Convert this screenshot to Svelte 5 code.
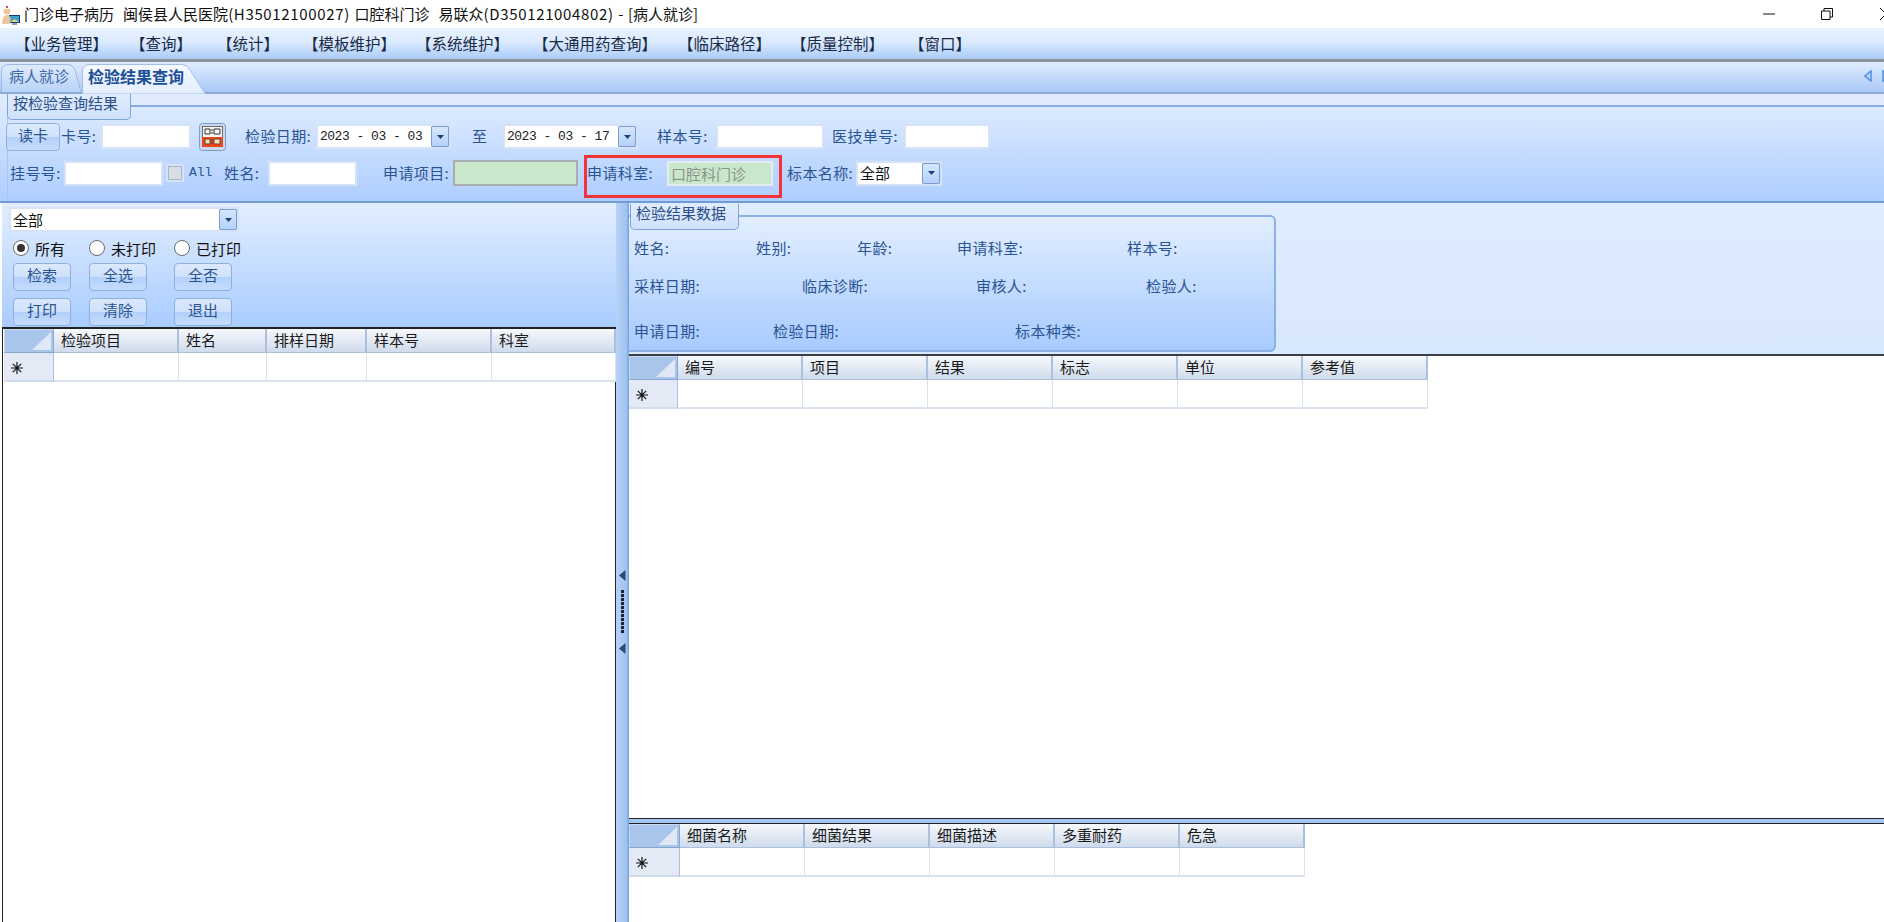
<script>
  const menus = ['【业务管理】', '【查询】', '【统计】', '【模板维护】', '【系统维护】', '【大通用药查询】', '【临床路径】', '【质量控制】', '【窗口】'];
  const leftCols = ['检验项目', '姓名', '排样日期', '样本号', '科室'];
  const rightCols = ['编号', '项目', '结果', '标志', '单位', '参考值'];
  const bottomCols = ['细菌名称', '细菌结果', '细菌描述', '多重耐药', '危急'];
</script>

{#snippet drop()}
  <span class="drop"><svg width="7" height="4" viewBox="0 0 7 4"><path d="M0 0h7L3.5 4z" fill="#1f3f78" /></svg></span>
{/snippet}

{#snippet datebox(value)}
  <span class="box date"><span class="dateval">{value}</span>{@render drop()}</span>
{/snippet}

{#snippet grid(kind, cols)}
  <div class="dg {kind}">
    <div class="dg-row head">
      <div class="corner"><svg width="20" height="18" viewBox="0 0 20 18"><path d="M20 0v18H1z" fill="#dfe8f4" /></svg></div>
      {#each cols as c}<div class="hcell">{c}</div>{/each}
    </div>
    <div class="dg-row body">
      <div class="rowhead">
        <svg width="12" height="12" viewBox="0 0 12 12"><path d="M6 0v12M0 6h12M1.8 1.8l8.4 8.4M10.2 1.8l-8.4 8.4" stroke="#111" stroke-width="1.2" /></svg>
      </div>
      {#each cols as c}<div class="cell"></div>{/each}
    </div>
  </div>
{/snippet}

<div class="app">
  <header class="title">
    <svg class="appicon" width="20" height="24" viewBox="0 0 20 24">
      <rect x="8" y="13" width="11" height="8" fill="#123a7a" />
      <rect x="9" y="14" width="9" height="6" fill="#3aa0c8" />
      <path d="M10 20l3-3 2 1 3 2z" fill="#e8d070" />
      <rect x="11" y="21" width="5" height="2" fill="#8aa0c0" />
      <circle cx="6" cy="9" r="3.5" fill="#f2c49a" />
      <path d="M2 7q4-6 8 0z" fill="#f4f6f8" />
      <path d="M1 22q0-9 5-9t3 9z" fill="#e9c8a0" />
      <rect x="5" y="4" width="2" height="2" fill="#e04040" />
    </svg>
    <span class="titletext">门诊电子病历  闽侯县人民医院<span class="lat">(H35012100027)</span>  口腔科门诊  易联众<span class="lat">(D350121004802)</span> - [病人就诊]</span>
    <svg class="wbtn min" width="12" height="2" viewBox="0 0 12 2"><path d="M0 1h12" stroke="#111" /></svg>
    <svg class="wbtn res" width="12" height="12" viewBox="0 0 12 12"><path d="M.5 3h8.500v8.500H.5zM3 3V.5h8.500V9H9" fill="none" stroke="#111" /></svg>
    <svg class="wbtn cls" width="12" height="12" viewBox="0 0 12 12"><path d="M0 0l12 12M12 0L0 12" stroke="#111" /></svg>
  </header>

  <nav class="menu">
    {#each menus as m, i}<span class="mi m{i}">{m}</span>{/each}
  </nav>

  <div class="tabs">
    <div class="tab t1">
      <svg class="tabshape" width="81" height="30" viewBox="0 0 81 30">
        <defs><linearGradient id="tg1" x1="0" y1="0" x2="0" y2="1"><stop offset="0" stop-color="#e0ecfe" /><stop offset="1" stop-color="#b9d3f8" /></linearGradient></defs>
        <path d="M.5 30V9Q.5 2.500 8 2.500H66Q72 2.500 74 8L80 30" fill="url(#tg1)" stroke="#9cbae2" />
      </svg>
      <span>病人就诊</span>
    </div>
    <div class="tab t2">
      <svg class="tabshape" width="124" height="32" viewBox="0 0 124 32">
        <defs><linearGradient id="tg2" x1="0" y1="0" x2="0" y2="1"><stop offset="0" stop-color="#f6f9ff" /><stop offset="1" stop-color="#e2edfe" /></linearGradient></defs>
        <path d="M.5 32V9Q.5 2.500 8 2.500H100Q105 2.500 108 8L122 30L124 32Z" fill="url(#tg2)" stroke="#a3c0e6" />
      </svg>
      <span>检验结果查询</span>
    </div>
    <div class="tabnav">
      <svg width="8" height="12" viewBox="0 0 8 12"><path d="M7 1v10L1 6z" fill="#bcd6fa" stroke="#4f8fe6" stroke-width="1.500" /></svg>
      <svg width="8" height="12" viewBox="0 0 8 12"><path d="M1 1v10l6-5z" fill="#bcd6fa" stroke="#4f8fe6" stroke-width="1.500" /></svg>
    </div>
  </div>

  <section class="query">
    <div class="q-frame">
      <div class="legend">按检验查询结果</div>
    </div>
    <div class="q-row r1">
      <button class="btn read">读卡</button>
      <span class="lab">卡号:</span>
      <span class="box w90"></span>
      <span class="qr">
        <svg width="27" height="28" viewBox="0 0 27 28">
          <rect x=".5" y=".5" width="26" height="27" rx="3" fill="#c8d8ee" stroke="#7f9cc8" />
          <rect x="3" y="3" width="21" height="21" fill="#6a6a6a" />
          <rect x="4" y="4" width="19" height="10" fill="#f4f4f4" />
          <path d="M6 6h5v5H6zM15 6h6v5h-6z" fill="none" stroke="#333" />
          <rect x="3" y="14" width="21" height="10" fill="#f2451f" />
          <path d="M6 16h5v5H6zM15 16h6v5h-6z" fill="#f6d8c8" stroke="#552" />
          <path d="M12 7h2M12 10h2M12 17h2M12 20h2" stroke="#333" />
        </svg>
      </span>
      <span class="lab">检验日期:</span>
      {@render datebox('2023 - 03 - 03')}
      <span class="lab">至</span>
      {@render datebox('2023 - 03 - 17')}
      <span class="lab">样本号:</span>
      <span class="box w108"></span>
      <span class="lab">医技单号:</span>
      <span class="box w86"></span>
    </div>
    <div class="q-row r2">
      <span class="lab">挂号号:</span>
      <span class="box w99"></span>
      <span class="check"></span>
      <span class="lab all">All</span>
      <span class="lab">姓名:</span>
      <span class="box w89"></span>
      <span class="lab">申请项目:</span>
      <span class="green"></span>
      <span class="lab">申请科室:</span>
      <span class="box dept">口腔科门诊</span>
      <span class="lab">标本名称:</span>
      <span class="box sel small"><span class="val">全部</span>{@render drop()}</span>
    </div>
    <div class="redmark"></div>
  </section>

  <main class="work">
    <aside class="left">
      <div class="filters">
        <span class="box sel wide"><span class="val">全部</span>{@render drop()}</span>
        <div class="triple radios">
          <label class="radio"><i class="dot on"></i>所有</label>
          <label class="radio"><i class="dot"></i>未打印</label>
          <label class="radio"><i class="dot"></i>已打印</label>
        </div>
        <div class="triple">
          <button class="btn act">检索</button><button class="btn act">全选</button><button class="btn act">全否</button>
        </div>
        <div class="triple">
          <button class="btn act">打印</button><button class="btn act">清除</button><button class="btn act">退出</button>
        </div>
      </div>
      <div class="leftgrid">{@render grid('g-left', leftCols)}</div>
    </aside>

    <div class="splitter">
      <svg width="7" height="11" viewBox="0 0 7 11"><path d="M6.500 0v11L0 5.500z" fill="#2c4a70" /></svg>
      <span class="grip"></span>
      <svg width="7" height="11" viewBox="0 0 7 11"><path d="M6.500 0v11L0 5.500z" fill="#2c4a70" /></svg>
    </div>

    <div class="right">
      <div class="result">
        <div class="rbox">
          <div class="legend rlegend">检验结果数据</div>
          <div class="info i1"><span>姓名:</span><span>姓别:</span><span>年龄:</span><span>申请科室:</span><span>样本号:</span></div>
          <div class="info i2"><span>采样日期:</span><span>临床诊断:</span><span>审核人:</span><span>检验人:</span></div>
          <div class="info i3"><span>申请日期:</span><span>检验日期:</span><span>标本种类:</span></div>
        </div>
      </div>
      <div class="midgrid">{@render grid('g-right', rightCols)}</div>
      <div class="botgrid">{@render grid('g-bottom', bottomCols)}</div>
    </div>
  </main>
</div>

<style>
  :global(body) { margin: 0; background: #fff; }
  .app {
    width: 1884px; height: 922px; overflow: hidden; display: flex; flex-direction: column;
    font-family: "Noto Sans CJK SC", "Noto Sans", sans-serif; font-size: 15px; color: #111;
  }
  .title { height: 28px; flex: none; background: #fff; display: flex; align-items: center; }
  .appicon { flex: none; margin-left: 1px; }
  .titletext { margin-left: 3px; white-space: pre; font-size: 15px; line-height: 28px; color: #111; word-spacing: 1.2px; }
  .lat { letter-spacing: .65px; }
  .wbtn { flex: none; }
  .min { margin-left: auto; }
  .res { margin-left: 46px; }
  .cls { margin-left: 47px; margin-right: -8px; }

  .menu {
    flex: none; display: grid; padding-left: 15px; align-items: center;
    grid-template-columns: 115px 87px 86px 113px 117px 145px 113px 118px auto;
    background: linear-gradient(#e8f2ff, #dcebff 45%, #a9cbf8);
    border-bottom: 3px solid #8d9199; box-sizing: content-box; height: 31px;
  }
  .mi { font-size: 15.5px; line-height: 31px; color: #1a2a44; white-space: nowrap; }

  .tabs {
    height: 30px; flex: none; display: flex; align-items: flex-end; padding-left: 1px;
    background: linear-gradient(#e0ecff, #aac9f6); border-bottom: 2px solid #8fa9d6; position: relative;
  }
  .tab { position: relative; height: 30px; box-sizing: border-box; line-height: 28px; flex: none; }
  .tab span { position: relative; white-space: nowrap; }
  .tabshape { position: absolute; left: 0; top: 0; }
  .t1 { width: 81px; padding-left: 8px; color: #3f6aa6; }
  .t2 { width: 124px; padding-left: 6px; color: #1b4f96; font-weight: 700; font-size: 16px; z-index: 2; }
  .tabnav { margin-left: auto; margin-right: -6px; display: flex; gap: 3px; padding-bottom: 10px; margin-top: auto; }
  .tabnav svg { flex: none; }
  .tabnav svg:first-child { margin-right: 7px; }

  .query {
    height: 109px; flex: none; position: relative; box-sizing: border-box;
    background: linear-gradient(#e2eeff, #aecdff);
    border-bottom: 2px solid #6f9bd8;
  }
  .q-frame { height: 27px; position: relative; background: linear-gradient(#e0ecfe, #e0ecfe 11px, transparent 11px); }
  .q-frame::before {
    content: ""; position: absolute; left: 7px; right: 0; top: 11px; bottom: -80px;
    border-top: 2px solid #87abe0; border-left: 1px solid #a8c6ee; border-top-left-radius: 5px;
  }
  .legend {
    position: absolute; left: 7px; top: 0; width: 124px; height: 26px; box-sizing: border-box;
    background: linear-gradient(#e0ecfe, #cfe1fc); color: #2b4f86; padding-left: 5px; line-height: 17px;
    border: 1px solid #7ea4da; border-top: 0; border-radius: 0 0 5px 5px; white-space: nowrap;
  }
  .q-row { position: relative; display: grid; align-items: center; }
  .r1 { padding-left: 6px; height: 31px; grid-template-columns: 55px 40px 98px 46px 71px 156px 31px 154px 59px 116px 72px auto; }
  .r2 { padding-left: 10px; height: 28px; margin-top: 7px; grid-template-columns: 54px 104px 21px 35px 44px 115px 70px 134px 80px 120px 69px auto; }
  .lab { color: #2a5391; white-space: nowrap; line-height: 20px; letter-spacing: .4px; }
  .r1 .lab { position: relative; top: -1px; }
  .all { font-family: "Liberation Mono", monospace; font-size: 13px; letter-spacing: 0; }
  .box {
    display: flex; align-items: center; height: 25px; box-sizing: border-box;
    background: #fff; border: 2px solid #d6e3f6;
  }
  .w90 { width: 90px; } .w108 { width: 108px; } .w86 { width: 86px; } .w99 { width: 99px; } .w89 { width: 89px; }
  .date { width: 135px; }
  .dateval { font-family: "Liberation Mono", monospace; font-size: 13px; letter-spacing: -.5px; margin-left: 2px; white-space: pre; color: #222; flex: 1; }
  .drop {
    width: 18px; height: 21px; flex: none; display: flex; align-items: center; justify-content: center; box-sizing: border-box;
    background: linear-gradient(#d6e6fd, #b5d1fb); border: 1px solid #7a9dd4; border-radius: 1px;
  }
  .btn {
    display: block; padding: 0 0 4px; box-sizing: border-box; font: inherit; color: #2a5391; line-height: 20px;
    border: 1px solid #8fb0dc; border-radius: 4px;
    background: linear-gradient(#dbe9fc, #cfe1fb 48%, #b4d0fa 52%, #c6dcfc);
  }
  .read { width: 54px; height: 28px; }
  .qr { display: block; height: 28px; }
  .qr svg { display: block; }
  .check { width: 14px; height: 14px; box-sizing: border-box; border: 1px solid #a8b8cc; background: #d8dde4; outline: 2px solid #d6e3f6; display: block; }
  .green { width: 125px; height: 26px; box-sizing: border-box; background: #cbe7cb; border: 2px solid #a8aeb0; display: block; }
  .dept { width: 106px; height: 25px; background: #cbe7cb; border-color: #e4ecf0; color: #8a958a; padding-left: 2px; white-space: nowrap; }
  .sel .val { flex: 1; color: #111; padding-left: 2px; line-height: 20px; }
  .small { width: 86px; }
  .wide { width: 230px; }
  .redmark { position: absolute; left: 584px; top: 61px; width: 198px; height: 43px; box-sizing: border-box; border: 3px solid #f2333a; }

  .work { flex: 1; display: flex; min-height: 0; }
  .left { width: 616px; flex: none; display: flex; flex-direction: column; padding-left: 2px; box-sizing: border-box; background: #fff; }
  .filters {
    height: 124px; flex: none; box-sizing: border-box; padding: 4px 0 0 7px;
    background: linear-gradient(#e2eeff, #a9ccff); margin-right: -1px;
  }
  .triple { display: grid; grid-template-columns: 76px 85px auto; padding-left: 4px; }
  .radios { height: 30px; align-items: center; margin-top: 1px; }
  .radio { display: flex; align-items: center; gap: 6px; color: #111; white-space: nowrap; }
  .dot { width: 16px; height: 16px; box-sizing: border-box; border-radius: 50%; border: 1px solid #6a6a6a; background: #fff; display: flex; align-items: center; justify-content: center; flex: none; }
  .dot.on::after { content: ""; width: 8px; height: 8px; border-radius: 50%; background: #333; }
  .act { width: 58px; height: 28px; margin-bottom: 7px; }

  .leftgrid { flex: 1; border: 1px solid #222; border-width: 2px 1px 0 1px; background: #fff; padding-left: 1px; }
  .dg-row { display: grid; width: max-content; }
  .g-left .dg-row { grid-template-columns: 50px 125px 88px 100px 125px 124px; }
  .g-right .dg-row { grid-template-columns: 49px repeat(6, 125px); }
  .g-bottom .dg-row { grid-template-columns: 51px repeat(5, 125px); }
  .head { height: 24px; }
  .body { height: 29px; }
  .corner {
    background: #a9c5ec; border: 1px solid #c9daf0; border-right-color: #86a6cf; border-bottom-color: #86a6cf;
    box-sizing: border-box; display: flex; justify-content: flex-end; align-items: flex-end; padding: 0 2px 2px 0;
  }
  .hcell {
    box-sizing: border-box; background: linear-gradient(#f6f8fb, #cfdbec); border-right: 2px solid #a9c1dd; border-bottom: 1px solid #a9c1dd;
    padding-left: 7px; font-size: 15px; line-height: 22px; color: #1a1a1a; white-space: nowrap;
  }
  .rowhead {
    box-sizing: border-box; background: #e3eaf6; border-right: 1px solid #a9c1dd; border-bottom: 2px solid #cfdcec;
    display: flex; align-items: center; padding: 3px 0 0 7px;
  }
  .cell { box-sizing: border-box; background: #fff; border-right: 1px solid #d9e3f0; border-bottom: 2px solid #d9e3f0; }

  .splitter {
    width: 13px; flex: none; display: flex; flex-direction: column; align-items: center; gap: 9px; padding-top: 367px;
    box-sizing: border-box; background: linear-gradient(90deg, #b7d2f6, #a2c3ef 80%, #6f9fe0);
  }
  .splitter svg { flex: none; }
  .grip { width: 3px; height: 44px; flex: none; background: repeating-linear-gradient(#1d2433 0 3px, transparent 3px 4px); margin-left: -1px; }

  .right { flex: 1; min-width: 0; display: flex; flex-direction: column; }
  .result { height: 151px; flex: none; box-sizing: border-box; padding-top: 12px; background: linear-gradient(#e0ecff, #d8e8fe); }
  .rbox {
    width: 647px; height: 137px; box-sizing: border-box; position: relative;
    background: linear-gradient(#e2eeff, #a8cbff); border: 1px solid #8ab0e4; border-width: 2px 2px 2px 0; border-radius: 0 6px 6px 0;
  }
  .rlegend { left: 1px; top: -13px; width: 109px; height: 26px; }
  .info { display: grid; color: #2a5391; line-height: 20px; padding-left: 5px; position: absolute; left: 0; width: 640px; box-sizing: border-box; letter-spacing: .4px; }
  .info span { white-space: nowrap; }
  .i1 { top: 21px; grid-template-columns: 122px 101px 100px 170px 1fr; }
  .i2 { top: 59px; grid-template-columns: 168px 174px 170px 1fr; }
  .i3 { top: 104px; grid-template-columns: 139px 242px 1fr; }

  .midgrid { height: 464px; flex: none; box-sizing: border-box; border-top: 2px solid #3a3f48; background: #fff; }
  .botgrid { flex: 1; border-top: 1px solid #222; box-sizing: border-box; background: #fff; position: relative; padding-top: 5px; }
  .botgrid::before { content: ""; position: absolute; left: 0; right: 0; top: 0; height: 4px; background: #a4c6f4; border-bottom: 1px solid #222; box-sizing: content-box; }
</style>
